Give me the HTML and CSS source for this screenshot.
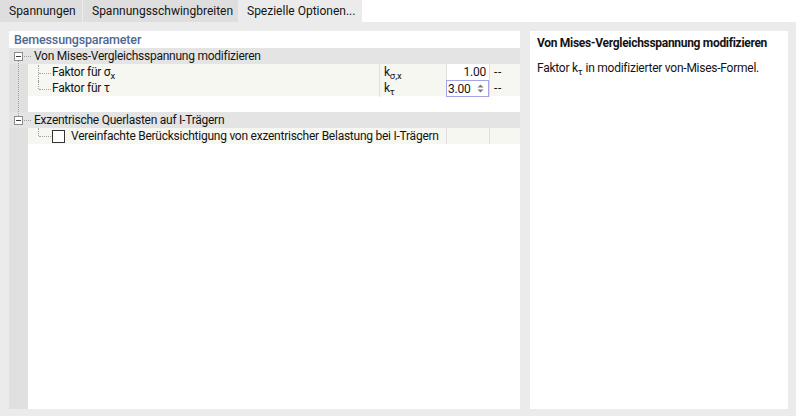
FILE: index.html
```html
<!DOCTYPE html>
<html lang="de">
<head>
<meta charset="utf-8">
<title>Spezielle Optionen</title>
<link rel="stylesheet" href="styles.css">
</head>
<body>
<div class="tabs">
  <div class="tab t1">Spannungen</div>
  <div class="tab t2">Spannungsschwingbreiten</div>
  <div class="tab t3 active">Spezielle Optionen...</div>
</div>
<div class="main">
  <div class="left">
    <div class="header">Bemessungsparameter</div>
    <div class="tree">
      <div class="section first">
        <div class="group"><span class="toggle"></span><span class="hdots"></span><span class="label">Von Mises-Vergleichsspannung modifizieren</span></div>
        <div class="row">
          <div class="name"><span class="conn mid"></span>Faktor für σ<span class="sub">x</span></div>
          <div class="sym">k<span class="sub">σ,x</span></div>
          <div class="val">1.00</div>
          <div class="unit">--</div>
        </div>
        <div class="row">
          <div class="name"><span class="conn"></span>Faktor für τ</div>
          <div class="sym">k<span class="sub">τ</span></div>
          <div class="val edit"><span>3.00</span><svg class="spin" width="7" height="11" viewBox="0 0 7 11"><polygon points="0.5,4.5 3.5,1.5 6.5,4.5" fill="#7a7a7a"/><polygon points="0.5,6.5 3.5,9.5 6.5,6.5" fill="#7a7a7a"/></svg></div>
          <div class="unit">--</div>
        </div>
        <div class="empty"></div>
      </div>
      <div class="section">
        <div class="group"><span class="toggle"></span><span class="hdots"></span><span class="label">Exzentrische Querlasten auf I-Trägern</span></div>
        <div class="row cbrow">
          <div class="name wide"><span class="conn"></span><span class="check"></span>Vereinfachte Berücksichtigung von exzentrischer Belastung bei I-Trägern</div>
          <div class="val plain"></div>
          <div class="unit"></div>
        </div>
      </div>
    </div>
  </div>
  <div class="right">
    <div class="info-title">Von Mises-Vergleichsspannung modifizieren</div>
    <div class="info-text">Faktor k<span class="sub">τ</span> in modifizierter von-Mises-Formel.</div>
  </div>
</div>
</body>
</html>
```

FILE: styles.css
```css
* { box-sizing: border-box; }
html, body { margin: 0; padding: 0; }
body {
  width: 796px;
  height: 416px;
  overflow: hidden;
  background: #ebebeb;
  font-family: Roboto, "Liberation Sans", sans-serif;
  font-size: 12px;
  color: #141414;
  display: flex;
  flex-direction: column;
}

.tabs {
  display: flex;
  height: 22px;
  background: #ffffff;
  flex: none;
}
.tab {
  height: 22px;
  line-height: 22px;
  padding-left: 9px;
  background: #dedede;
  white-space: nowrap;
  font-size: 12px;
}
.t1 { width: 83px; border-right: 1px solid #ececec; }
.t2 { width: 155px; }
.t3 { width: 124px; }
.tab.active { background: #ebebeb; }

.main {
  flex: 1;
  display: flex;
  gap: 10px;
  padding: 9px 8px 7px 9px;
}
.left {
  width: 511px;
  background: #ffffff;
  display: flex;
  flex-direction: column;
}
.header {
  height: 17px;
  line-height: 18px;
  padding-left: 5px;
  color: #4f6890;
  font-size: 12.5px;
  font-weight: 500;
  letter-spacing: -0.15px;
  flex: none;
}
.tree {
  flex: 1;
  background: linear-gradient(to right, #e0e0e0 19px, #ffffff 19px);
}
.section { position: relative; }
.section.first::before {
  content: "";
  position: absolute;
  left: 9px;
  top: 13px;
  bottom: -4px;
  border-left: 1px dotted #a0a0a0;
  z-index: 1;
}
.group {
  height: 16px;
  background: #e4e4e4;
  display: flex;
  align-items: center;
  white-space: nowrap;
}
.toggle {
  position: relative;
  width: 9px;
  height: 9px;
  margin-left: 5px;
  border: 1px solid #8c8c8c;
  background: #ffffff;
  flex: none;
}
.toggle::after {
  content: "";
  position: absolute;
  left: 1px;
  top: 3px;
  width: 5px;
  height: 1px;
  background: #3c3c3c;
}
.hdots {
  width: 7px;
  margin-left: 1px;
  border-top: 1px dotted #a0a0a0;
  flex: none;
}
.label {
  margin-left: 3px;
  line-height: 17px;
  font-size: 12px;
  letter-spacing: -0.25px;
}

.row {
  margin-left: 19px;
  height: 16px;
  display: grid;
  grid-template-columns: 351px 67px 43px 31px;
  background: #f7f7f2;
  line-height: 17px;
  white-space: nowrap;
  font-size: 12px;
  letter-spacing: -0.25px;
}
.cbrow { grid-template-columns: 418px 43px 31px; }
.name {
  display: flex;
  align-items: center;
  overflow: hidden;
}
.conn {
  position: relative;
  width: 14px;
  height: 16px;
  margin-left: 10px;
  flex: none;
}
.conn::before {
  content: "";
  position: absolute;
  left: 0;
  top: 0;
  height: 8px;
  border-left: 1px dotted #a0a0a0;
}
.conn.mid::before { height: 16px; }
.conn::after {
  content: "";
  position: absolute;
  left: 1px;
  top: 8px;
  width: 12px;
  border-top: 1px dotted #a0a0a0;
}
.check {
  width: 13px;
  height: 13px;
  border: 1px solid #333333;
  background: #ffffff;
  margin-right: 6px;
  flex: none;
}
.sub {
  font-size: 9.5px;
  position: relative;
  top: 3px;
  line-height: 0;
  letter-spacing: 0;
}
.sym {
  border-left: 1px solid #e0e0e0;
  padding-left: 4px;
}
.val {
  border-left: 1px solid #e0e0e0;
  background: #ffffff;
  text-align: right;
  padding-right: 3px;
}
.val.plain { background: #f7f7f2; }
.val.edit {
  border: 1px solid #a3a3e6;
  text-align: left;
  padding: 0 0 0 1px;
  display: flex;
  align-items: center;
  justify-content: space-between;
  line-height: 14px;
}
.spin { margin-right: 4px; }
.unit {
  border-left: 1px solid #e0e0e0;
  padding-left: 4px;
  letter-spacing: 0.6px;
}
.empty { height: 16px; }

.right {
  width: 258px;
  background: #ffffff;
  padding: 4px 7px;
  font-size: 12px;
}
.info-title {
  font-weight: bold;
  line-height: 17px;
  font-size: 12px;
  letter-spacing: -0.3px;
  white-space: nowrap;
}
.info-text {
  margin-top: 8px;
  line-height: 16px;
  letter-spacing: -0.25px;
  white-space: nowrap;
}
```
